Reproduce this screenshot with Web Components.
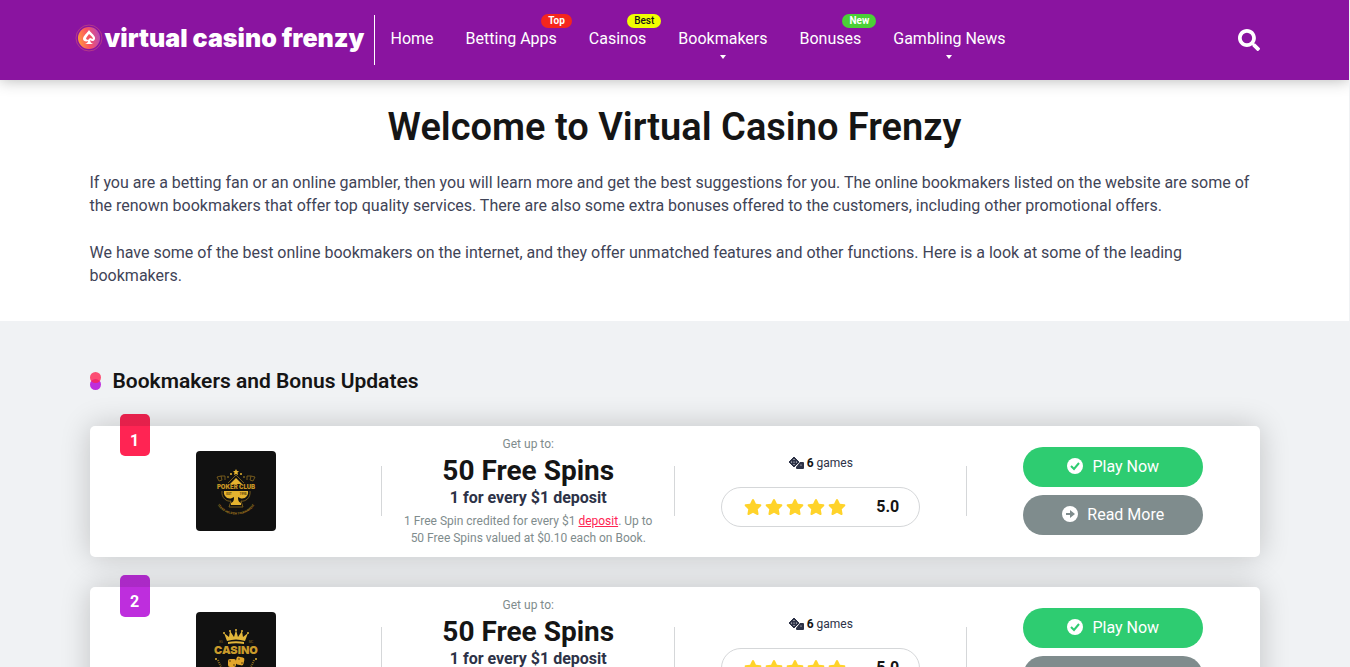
<!DOCTYPE html>
<html lang="en">
<head>
<meta charset="UTF-8">
<meta name="viewport" content="width=device-width, initial-scale=1.0">
<title>Virtual Casino Frenzy</title>
<style>
  body {
    margin: 0 1px 0 0;
    font-family: Roboto, "Liberation Sans", sans-serif;
    font-size: 16px;
    color: #151515;
    background: #f0f2f4;
  }
</style>
</head>
<body>

<site-header>
  <nav-item href="#home">Home</nav-item>
  <nav-item href="#apps" badge="Top" tone="top">Betting Apps</nav-item>
  <nav-item href="#casinos" badge="Best" tone="best">Casinos</nav-item>
  <nav-item href="#bookmakers" submenu>Bookmakers</nav-item>
  <nav-item href="#bonuses" badge="New" tone="new">Bonuses</nav-item>
  <nav-item href="#news" submenu>Gambling News</nav-item>
</site-header>

<main>
  <intro-section>
    <span slot="title">Welcome to Virtual Casino Frenzy</span>
    <p>If you are a betting fan or an online gambler, then you will learn more and get the best suggestions for you. The online bookmakers listed on the website are some of the renown bookmakers that offer top quality services. There are also some extra bonuses offered to the customers, including other promotional offers.</p>
    <p>We have some of the best online bookmakers on the internet, and they offer unmatched features and other functions. Here is a look at some of the leading bookmakers.</p>
  </intro-section>

  <bookmaker-list heading="Bookmakers and Bonus Updates">
    <bookmaker-card rank="1" logo="poker" bonus="50 Free Spins" rule="1 for every $1 deposit" games="6" rating="5.0"></bookmaker-card>
    <bookmaker-card rank="2" logo="casino" bonus="50 Free Spins" rule="1 for every $1 deposit" games="6" rating="5.0"></bookmaker-card>
  </bookmaker-list>
</main>

<script>
// header bar: logo, menu, search
class SiteHeader extends HTMLElement {
  constructor() {
    super();
    this.attachShadow({ mode: 'open' });
  }

  connectedCallback() {
    this.shadowRoot.innerHTML = `
      <style>
        :host {
          display: block;
          position: relative;
          z-index: 1;
          background: #8a14a0;
          box-shadow: 0 0 15px rgba(0, 0, 0, .3);
        }
        .bar {
          display: flex;
          align-items: center;
          max-width: 1200px;
          height: 80px;
          margin: 0 auto;
        }
        .logo {
          display: flex;
          align-items: center;
          gap: 2px;
          box-sizing: border-box;
          width: 300px;
          height: 50px;
          padding-bottom: 4px;
          border-right: 1px solid #fff;
          color: #fff;
          font: 900 25px/30px Inter, "Open Sans", sans-serif;
          white-space: nowrap;
          text-decoration: none;
        }
        .logo svg { flex: none; }
        nav { display: flex; flex: 1; }
        button {
          display: flex;
          padding: 0;
          margin-right: 15px;
          border: 0;
          background: none;
          cursor: pointer;
        }
      </style>
      <header class="bar">
        <a class="logo" href="#home">
          <svg width="28" height="28" viewBox="0 0 28 28" aria-hidden="true">
            <defs>
              <linearGradient id="g" x1="0" y1="0.6" x2="1" y2="0.4">
                <stop offset="0" stop-color="#ff9a3c"/>
                <stop offset=".45" stop-color="#fb5361"/>
                <stop offset="1" stop-color="#b94bb5"/>
              </linearGradient>
            </defs>
            <circle cx="14" cy="14" r="13" fill="none" stroke="#c4477f" stroke-opacity=".7"/>
            <circle cx="14" cy="14" r="11" fill="url(#g)"/>
            <path d="M14 6c2 3 7 6 6 9-.6 2-3 3-5 1 .3 2 1 3 3 4h-8c2-.5 3-2 3-3-2 1-5 0-5-2 0-3 4-6 6-9z" fill="#fff"/>
            <path d="M14 10c2 2 4 3 4 5l-3-1-2 2-2-1c0-2 2-3 3-5z" fill="#f25461"/>
          </svg>
          virtual casino frenzy
        </a>
        <nav><slot></slot></nav>
        <button type="button" aria-label="Search">
          <svg width="22" height="22" viewBox="0 0 512 512" fill="#fff"><path d="M505 442.700 405.300 343c-4.500-4.500-10.600-7-17-7H372c27.600-35.300 44-79.700 44-128C416 93.100 322.900 0 208 0S0 93.100 0 208s93.100 208 208 208c48.300 0 92.700-16.400 128-44v16.300c0 6.400 2.500 12.500 7 17l99.700 99.700c9.400 9.400 24.600 9.400 33.900 0l28.300-28.300c9.400-9.400 9.400-24.600.1-34zM208 330a122 122 0 1 1 0-244 122 122 0 0 1 0 244z"/></svg>
        </button>
      </header>
    `;
  }
}

class NavItem extends HTMLElement {
  constructor() {
    super();
    this.attachShadow({ mode: 'open' });
  }

  connectedCallback() {
    const badge = this.getAttribute('badge');
    const caret = this.hasAttribute('submenu');
    this.shadowRoot.innerHTML = `
      <style>
        :host { display: block; padding: 0 16px; }
        a {
          display: block;
          position: relative;
          padding: 29px 0 31px;
          color: #fff;
          font-weight: 400;
          line-height: 20px;
          text-decoration: none;
          white-space: nowrap;
        }
        .badge {
          position: absolute;
          top: 14px;
          right: -15px;
          padding: 0 7px;
          border-radius: 7px;
          font-size: 10px;
          font-weight: 700;
          line-height: 14px;
        }
        .top { background: #f5261d; }
        .best { background: #f0ff00; color: #151515; font-weight: 500; }
        .new { background: #4bd037; }
        .caret {
          position: absolute;
          top: 55px;
          left: 50%;
          margin-left: -3px;
          border: 3px solid transparent;
          border-top: 4px solid #fff;
          border-bottom: 0;
        }
      </style>
      <a href="${this.getAttribute('href')}">
        <slot></slot>
        ${badge ? `<span class="badge ${this.getAttribute('tone')}">${badge}</span>` : ''}
        ${caret ? '<span class="caret"></span>' : ''}
      </a>
    `;
  }
}

class IntroSection extends HTMLElement {
  constructor() {
    super();
    this.attachShadow({ mode: 'open' });
  }

  connectedCallback() {
    this.shadowRoot.innerHTML = `
      <style>
        :host { display: block; background: #fff; }
        section {
          max-width: 1170px;
          margin: 0 auto;
          padding: 23px 15px 34px;
        }
        h1 {
          margin: 0 0 20px;
          font-size: 38px;
          font-weight: 600;
          line-height: 48px;
          text-align: center;
        }
        ::slotted(p) {
          margin: 0 0 24px;
          color: #3f4457;
          line-height: 23px;
        }
        ::slotted(p:last-child) { margin-bottom: 0; }
      </style>
      <section>
        <h1><slot name="title"></slot></h1>
        <slot></slot>
      </section>
    `;
  }
}

class BookmakerList extends HTMLElement {
  constructor() {
    super();
    this.attachShadow({ mode: 'open' });
  }

  connectedCallback() {
    this.shadowRoot.innerHTML = `
      <style>
        :host { display: block; }
        section {
          max-width: 1170px;
          margin: 0 auto;
          padding: 45px 15px;
        }
        h2 {
          display: flex;
          align-items: center;
          gap: 12px;
          margin: 0 0 30px;
          font-size: 21px;
          font-weight: 600;
          line-height: 30px;
        }
        .cards {
          display: flex;
          flex-direction: column;
          gap: 30px;
        }
      </style>
      <section>
        <h2>
          <svg width="11" height="18" viewBox="0 0 11 18" aria-hidden="true">
            <circle cx="5.5" cy="12.500" r="5.500" fill="#be2edd"/>
            <circle cx="5.5" cy="5.500" r="5.500" fill="#ff2453" fill-opacity=".8"/>
          </svg>
          ${this.getAttribute('heading')}
        </h2>
        <div class="cards"><slot></slot></div>
      </section>
    `;
  }
}

// brand pictures, by the logo attribute of the card
const logos = {
  poker: `
    <svg width="80" height="80" viewBox="0 0 80 80" role="img" aria-label="Poker Club">
      <rect width="80" height="80" rx="4" fill="#111"/>
      <g fill="#e5b32f">
        <path d="M40 18l1 2h2l-1.500 1.500.5 2.500-2-1-2 1 .5-2.500L37 20h2z"/>
        <circle cx="35" cy="23" r="1"/><circle cx="45" cy="23" r="1"/>
        <circle cx="32" cy="26" r=".7"/><circle cx="48" cy="26" r=".7"/>
        <path d="M40 27l6 6H34z"/>
        <path d="M28 40h24c1 5-4 9-8 7l-2-1c0 4 1 5 3 6v2H35v-2c2-1 3-2 3-6l-2 1c-4 2-9-2-8-7z"/>
      </g>
      <g fill="none" stroke="#8a6a1e" stroke-width=".8">
        <path d="M32 32l8-8 8 8M26 40c-1 7 5 11 9 10l-2 6h14l-2-6c4 1 10-3 9-10"/>
        <path d="M21 26l4-1 1 4-3 1zM25 25h4v4M59 26l-4-1-1 4 3 1zM55 25h-4v4"/>
      </g>
      <text x="40" y="38" text-anchor="middle" font-family="Inter, sans-serif" font-size="6" font-weight="900" fill="#c69424">POKER CLUB</text>
      <text x="33" y="44" text-anchor="middle" font-size="3" font-weight="700" fill="#5c430c">EST</text>
      <text x="47" y="44" text-anchor="middle" font-size="3" font-weight="700" fill="#5c430c">1998</text>
      <path id="arc" d="M20 50C25 68 55 68 60 50" fill="none"/>
      <text font-size="3" font-weight="700" fill="#a77b1d"><textPath href="#arc" startOffset="50%" text-anchor="middle">TEXAS HOLD'EM TOURNAMENT</textPath></text>
    </svg>`,
  casino: `
    <svg width="80" height="80" viewBox="0 0 80 80" role="img" aria-label="Casino">
      <rect width="80" height="80" rx="4" fill="#111"/>
      <g fill="#e2b63a">
        <path d="M31 29l-3-8 5 4 1-6 4 6 2-7 2 7 4-6 1 6 5-4-3 8c-6-2-12-2-18 0z"/>
        <path d="M32 30c5-1 11-1 16 0v2c-5-1-11-1-16 0z"/>
        <circle cx="28" cy="21" r="1"/><circle cx="34" cy="19" r="1"/><circle cx="40" cy="18" r="1"/>
        <circle cx="46" cy="19" r="1"/><circle cx="52" cy="21" r="1"/>
        <circle cx="20" cy="47" r="1"/><circle cx="60" cy="47" r="1"/>
      </g>
      <text x="40" y="42" text-anchor="middle" font-family="Inter, sans-serif" font-size="11" font-weight="900" fill="#c99a2b">CASINO</text>
      <text x="25" y="31" text-anchor="middle" font-size="3" fill="#8a6a1e">ES</text>
      <text x="55" y="31" text-anchor="middle" font-size="3" fill="#8a6a1e">MC</text>
      <rect x="32" y="47" width="8" height="8" rx="2" fill="#e2a52b"/>
      <rect x="40" y="45" width="8" height="8" rx="2" fill="#e2a52b" transform="rotate(12 44 49)"/>
      <g fill="#4d360a"><circle cx="34" cy="49" r=".8"/><circle cx="38" cy="53" r=".8"/><circle cx="43" cy="47" r=".8"/><circle cx="46" cy="51" r=".8"/></g>
      <path d="M22 48c2 6 5 10 8 12M58 48c-2 6-5 10-8 12" fill="none" stroke="#8a6a1e" stroke-width="2" stroke-dasharray="1 1"/>
    </svg>`
};

class BookmakerCard extends HTMLElement {
  constructor() {
    super();
    this.attachShadow({ mode: 'open' });
  }

  getStyles() {
    return `
      <style>
        :host {
          display: grid;
          grid-template-columns: repeat(4, 1fr);
          align-items: center;
          position: relative;
          padding-bottom: 1px;
          border-radius: 5px;
          background: #fff;
          box-shadow: 0 0 30px rgba(0, 0, 0, .2);
        }
        .rank {
          position: absolute;
          top: -12px;
          left: 30px;
          box-sizing: border-box;
          width: 30px;
          height: 42px;
          padding-top: 12px;
          border-radius: 5px;
          background: linear-gradient(rgba(0, 0, 0, .1) 12px, transparent 12px) var(--rank);
          color: #fff;
          font-weight: 700;
          line-height: 29px;
          text-align: center;
        }
        .cell {
          display: flex;
          flex-direction: column;
          align-items: center;
          align-self: stretch;
          justify-content: center;
          text-align: center;
        }
        .cell:not(:last-child) {
          background: linear-gradient(#d5d7d9, #d5d7d9) right center / 1px 50px no-repeat;
        }
        .logo svg { display: block; }
        .bonus { padding: 10px 20px 9px; }
        .small {
          color: #7f8c8d;
          font-size: 12px;
          line-height: 17px;
        }
        .small a { color: #ff2453; }
        h3 {
          margin: 0;
          font-size: 28px;
          font-weight: 700;
          line-height: 36px;
        }
        .rule {
          margin-bottom: 6px;
          color: #2d3247;
          font-weight: 700;
          line-height: 18px;
        }
        .score {
          gap: 15px;
          padding-bottom: 2px;
          background-position: right 40px !important;
        }
        .games {
          display: flex;
          align-items: center;
          gap: 3px;
          color: #2d3247;
          font-size: 12px;
          line-height: 18px;
        }
        .games b { color: #151515; }
        .actions { gap: 8px; }
      </style>
    `;
  }

  connectedCallback() {
    const attr = name => this.getAttribute(name);
    const colour = attr('rank') === '1' ? '#ff2453' : '#be2edd';
    this.shadowRoot.innerHTML = `
      ${this.getStyles()}
      <span class="rank" style="--rank: ${colour}">${attr('rank')}</span>
      <div class="cell logo">${logos[attr('logo')]}</div>
      <div class="cell bonus">
        <span class="small">Get up to:</span>
        <h3>${attr('bonus')}</h3>
        <span class="rule">${attr('rule')}</span>
        <span class="small">1 Free Spin credited for every $1 <a href="#deposit">deposit</a>. Up to 50 Free Spins valued at $0.10 each on Book.</span>
      </div>
      <div class="cell score">
        <span class="games">
          <svg width="15" height="12" viewBox="0 0 15 12" aria-hidden="true">
            <path d="M5 0l5 5-5 5-5-5z" fill="#2d3247" stroke="#2d3247" stroke-linejoin="round"/>
            <path d="M11 5h3a1 1 0 0 1 1 1v5a1 1 0 0 1-1 1H8a1 1 0 0 1-1-1v-1z" fill="#2d3247"/>
            <g fill="#fff"><circle cx="5" cy="2.500" r=".6"/><circle cx="2.500" cy="5" r=".6"/><circle cx="5" cy="5" r=".6"/><circle cx="7.500" cy="5" r=".6"/><circle cx="5" cy="7.500" r=".6"/><circle cx="12" cy="8" r=".6"/></g>
          </svg>
          <span><b>${attr('games')}</b> games</span>
        </span>
        <star-rating value="${attr('rating')}"></star-rating>
      </div>
      <div class="cell actions">
        <pill-button icon="check">Play Now</pill-button>
        <pill-button icon="arrow">Read More</pill-button>
      </div>
    `;
  }
}

class StarRating extends HTMLElement {
  constructor() {
    super();
    this.attachShadow({ mode: 'open' });
  }

  connectedCallback() {
    const value = this.getAttribute('value');
    const star = '<svg width="18" height="16" viewBox="0 0 576 512"><path fill="#ffd32a" d="M259 18 194 150 48 171c-26 4-37 36-18 55l106 103-25 145c-5 26 23 46 46 34l131-69 131 69c23 12 51-8 46-34l-25-145 106-103c19-19 8-51-18-55l-146-21L317 18c-12-24-46-24-58 0z"/></svg>';
    this.shadowRoot.innerHTML = `
      <style>
        :host {
          display: flex;
          align-items: center;
          justify-content: space-between;
          box-sizing: border-box;
          width: 199px;
          height: 40px;
          padding: 0 20px 0 22px;
          border: 1px solid #d5d7d9;
          border-radius: 20px;
        }
        .stars { display: flex; gap: 3px; }
        b { font-size: 16px; }
      </style>
      <span class="stars">${star.repeat(Math.round(value))}</span>
      <b>${value}</b>
    `;
  }
}

class PillButton extends HTMLElement {
  constructor() {
    super();
    this.attachShadow({ mode: 'open' });
  }

  connectedCallback() {
    const check = this.getAttribute('icon') === 'check';
    const colour = check ? '#2ecc71' : '#7f8c8d';
    const shape = check
      ? `<path d="M4 8l3 3 5-6" fill="none" stroke="${colour}" stroke-width="2"/>`
      : `<path d="M4 7h4V4l5 4-5 4V9H4z" fill="${colour}"/>`;
    this.shadowRoot.innerHTML = `
      <style>
        :host { display: block; }
        button {
          display: flex;
          align-items: center;
          justify-content: center;
          gap: 9px;
          width: 180px;
          height: 40px;
          padding: 0;
          border: 0;
          border-radius: 20px;
          background: ${colour};
          color: #fff;
          font: 400 16px/20px Roboto, sans-serif;
          cursor: pointer;
        }
        svg { margin-bottom: 2px; }
      </style>
      <button type="button">
        <svg width="16" height="16" viewBox="0 0 16 16" aria-hidden="true"><circle cx="8" cy="8" r="8" fill="#fff"/>${shape}</svg>
        <slot></slot>
      </button>
    `;
  }
}

customElements.define('site-header', SiteHeader);
customElements.define('nav-item', NavItem);
customElements.define('intro-section', IntroSection);
customElements.define('bookmaker-list', BookmakerList);
customElements.define('bookmaker-card', BookmakerCard);
customElements.define('star-rating', StarRating);
customElements.define('pill-button', PillButton);
</script>
</body>
</html>
